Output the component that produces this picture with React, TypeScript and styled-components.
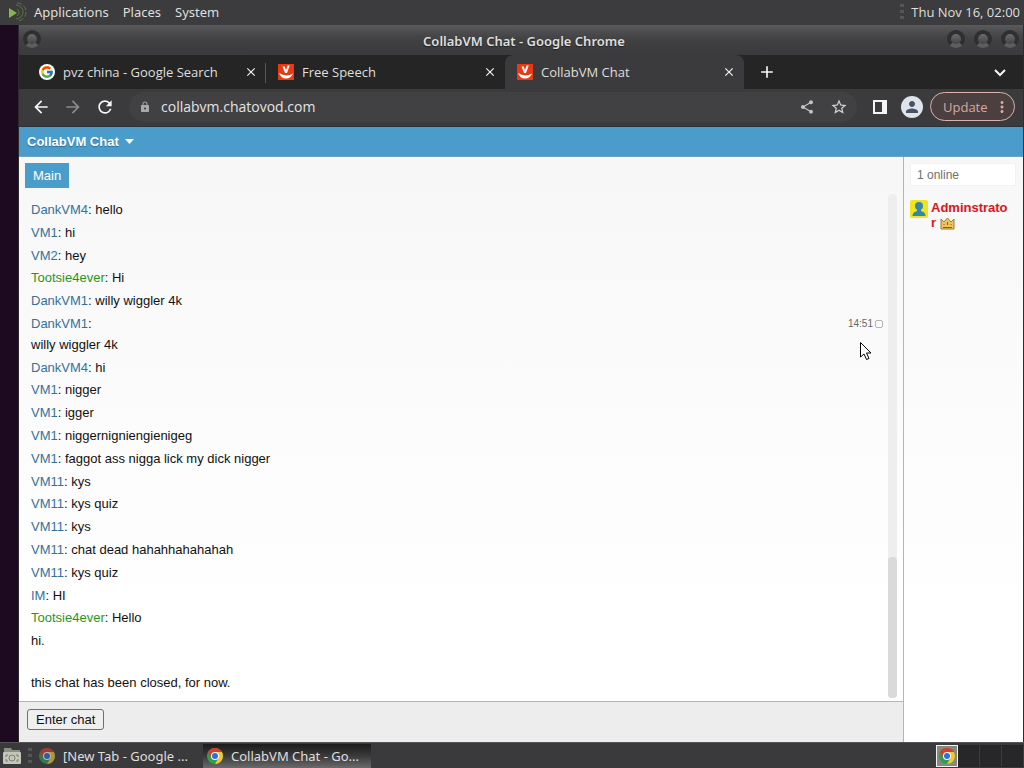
import React from "react";
import styled, { createGlobalStyle } from "styled-components";
import {
  MdArrowBack,
  MdArrowForward,
  MdRefresh,
  MdLock,
  MdShare,
  MdStarBorder,
  MdPerson,
  MdMoreVert,
  MdAdd,
  MdClose,
} from "react-icons/md";
import { FcGoogle } from "react-icons/fc";

const Global = createGlobalStyle`
  *, *::before, *::after { box-sizing: border-box; }
  body { margin: 0; background: #1d0a20; }
  button { font: inherit; color: inherit; margin: 0; padding: 0; border: 0; background: none; }
`;

const Desktop = styled.div`
  display: flex;
  flex-direction: column;
  min-height: 100vh;
  background: #1d0a20;
  color: #dfdfdf;
  font-family: "Noto Sans", sans-serif;
  font-size: 13px;
`;

/* ---------- desktop panels ---------- */

const TopPanel = styled.header`
  display: flex;
  align-items: center;
  height: 25px;
  padding: 0 4px 2px 8px;
  background: #3c3b3d;
`;

const Menu = styled.nav`
  display: flex;
  gap: 14px;
  margin-left: 7px;
  flex: 1;
`;

const Grip = styled.span`
  width: 4px;
  height: 16px;
  margin-right: 7px;
  background: repeating-linear-gradient(#565557 0 3px, transparent 3px 6px);
`;

const Clock = styled.time`
  font-family: "Open Sans", sans-serif;
`;

const BottomPanel = styled.footer`
  display: flex;
  align-items: center;
  height: 26px;
  border-top: 1px solid #555456;
  background: #3a393b;
`;

const Files = styled.button`
  display: flex;
  margin: 0 6px 0 2px;
`;

const Task = styled.button<{ $active?: boolean }>`
  display: flex;
  align-items: center;
  gap: 8px;
  width: 168px;
  height: 24px;
  padding: 0 4px;
  white-space: nowrap;
  background: ${(p) =>
    p.$active ? "linear-gradient(#1b1b1c, #3a3a3b 50%, #6a6a6b)" : "transparent"};
  svg { flex: none; opacity: ${(p) => (p.$active ? 1 : 0.65)}; }
`;

const TaskList = styled.nav`
  display: flex;
  margin-left: -4px;
`;

const Workspaces = styled.div`
  display: flex;
  margin-left: auto;
`;

const Workspace = styled.button<{ $current?: boolean }>`
  display: flex;
  align-items: center;
  justify-content: center;
  width: 22px;
  height: 22px;
  border: 1px solid ${(p) => (p.$current ? "#f2f2f2" : "transparent")};
  border-right-color: ${(p) => (p.$current ? "#f2f2f2" : "#3d3c3e")};
  background: ${(p) => (p.$current ? "#85897f" : "#272628")};
`;

/* ---------- browser window ---------- */

const Browser = styled.main`
  flex: 1;
  display: flex;
  flex-direction: column;
  margin-left: 18px;
  border: solid #2c2b2d;
  border-width: 0 1px 0 1px;
  background: #3b3a3c;
`;

const TitleBar = styled.div`
  display: flex;
  align-items: center;
  height: 30px;
  padding: 0 4px 2px;
  background: linear-gradient(#5a595b, #49484a 30%, #414042 50%, #3a393b);
`;

const Title = styled.h1`
  flex: 1;
  margin: 0 0 0 60px;
  padding-top: 4px;
  text-align: center;
  font-size: 13px;
  font-weight: 600;
  text-shadow: 0 1px 1px #222;
`;

const Knobs = styled.div`
  display: flex;
  gap: 9px;
`;

const Knob = styled.button`
  width: 18px;
  height: 18px;
  border-radius: 50%;
  border: 4px solid #2f2e30;
  border-bottom-color: #5d5c5e;
  background: linear-gradient(#6b6a6c, #434244);
`;

const TabStrip = styled.div`
  display: flex;
  height: 34px;
  padding: 0 6px 0 8px;
  background: #252526;
`;

const Tab = styled.div<{ $active?: boolean; $divided?: boolean }>`
  position: relative;
  display: flex;
  align-items: center;
  flex: 0 1 239px;
  min-width: 0;
  padding: 0 8px 0 12px;
  border-radius: 8px 8px 0 0;
  background: ${(p) => (p.$active ? "#3b3a3c" : "transparent")};
  &::after {
    content: "";
    display: ${(p) => (p.$divided ? "block" : "none")};
    position: absolute;
    right: 0;
    top: 8px;
    width: 1px;
    height: 20px;
    background: #555456;
  }
`;

const TabLabel = styled.span`
  flex: 1;
  margin-left: 8px;
  overflow: hidden;
  white-space: nowrap;
  font-family: "Open Sans", sans-serif;
`;

const IconButton = styled.button<{ $size?: number; $color?: string }>`
  display: flex;
  align-items: center;
  justify-content: center;
  flex: none;
  width: ${(p) => p.$size ?? 32}px;
  height: ${(p) => p.$size ?? 32}px;
  color: ${(p) => p.$color ?? "#f5f5f5"};
`;

const NewTabButton = styled(IconButton)`
  margin-left: 6px;
`;

const Spacer = styled.span`
  flex: 1;
`;

const Toolbar = styled.div`
  display: flex;
  align-items: center;
  height: 38px;
  padding: 0 8px 2px 6px;
  border-bottom: 1px solid #29333e;
`;

const AddressBar = styled.label`
  display: flex;
  align-items: center;
  flex: 1;
  height: 30px;
  margin: 0 7px 0 8px;
  padding: 0 2px 0 10px;
  border-radius: 15px;
  background: #414043;
  color: #a9a8aa;
`;

const Address = styled.input`
  flex: 1;
  min-width: 0;
  margin-left: 10px;
  padding: 0;
  border: 0;
  outline: 0;
  background: none;
  color: #e4e4e4;
  font: 14px "Open Sans", sans-serif;
`;

const Avatar = styled.button`
  display: flex;
  align-items: center;
  justify-content: center;
  width: 22px;
  height: 22px;
  margin: 0 7px 0 5px;
  border-radius: 50%;
  background: #dfe3ec;
  color: #4a5266;
`;

const UpdateButton = styled.button`
  display: flex;
  align-items: center;
  justify-content: space-between;
  width: 85px;
  height: 29px;
  padding: 0 3px 0 12px;
  border: 1px solid #dcb3ad;
  border-radius: 15px;
  background: #4b3f40;
  color: #d9a8a2;
  font-family: "Open Sans", sans-serif;
`;

/* ---------- chat page ---------- */

const Page = styled.div`
  flex: 1;
  display: flex;
  flex-direction: column;
  font-family: "Liberation Sans", Arial, sans-serif;
  font-size: 13px;
  color: #111;
`;

const ChatHeader = styled.div`
  height: 30px;
  padding: 0 8px;
  border-bottom: 1px solid #73a4bf;
  background: #4a9dcb;
`;

const ChatMenu = styled.button`
  display: flex;
  align-items: center;
  gap: 6px;
  height: 29px;
  color: #fff;
  font-weight: bold;
  text-shadow: 0 1px 1px #2c6a90;
`;

const Columns = styled.div`
  flex: 1;
  display: flex;
  background: linear-gradient(#f7f7f7, #fff 80%);
`;

const ChatColumn = styled.section`
  flex: 1;
  display: flex;
  flex-direction: column;
`;

const RoomTabs = styled.div`
  padding: 6px;
`;

const RoomTab = styled.button`
  height: 25px;
  padding: 0 8px;
  background: #4a9dcb;
  color: #fff;
`;

const LogArea = styled.div`
  flex: 1;
  display: flex;
  padding: 0 6px 3px 12px;
`;

const Log = styled.ul`
  flex: 1;
  margin: 0;
  padding: 5px 5px 0 0;
  list-style: none;
  line-height: 1.6;
`;

const Message = styled.li`
  position: relative;
  padding: 1px 0;
  white-space: pre-line;
`;

const Nick = styled.a<{ $green?: boolean }>`
  color: ${(p) => (p.$green ? "#1f961f" : "#36719a")};
  text-decoration: none;
`;

const Stamp = styled.label`
  display: flex;
  align-items: center;
  gap: 2px;
  float: right;
  height: 21px;
  color: #666;
  font-size: 10px;
`;

const Tick = styled.input`
  appearance: none;
  width: 8px;
  height: 8px;
  margin: 0;
  border: 1px solid #b5b5b5;
  border-radius: 2px;
`;

const Cursor = styled.svg`
  position: absolute;
  right: 10px;
  top: 28px;
`;

const ScrollTrack = styled.div`
  display: flex;
  align-items: flex-end;
  width: 9px;
  background: #eee;
  border-radius: 4px;
`;

const ScrollThumb = styled.div`
  width: 100%;
  height: 28%;
  border-radius: 4px;
  background: #dadada;
`;

const EntryBar = styled.div`
  height: 41px;
  padding: 7px 8px;
  border-top: 1px solid #b5b5b5;
  background: #ededed;
`;

const EnterButton = styled.button`
  height: 21px;
  padding: 0 8px;
  border: 1px solid #6f6f6f;
  border-radius: 3px;
  background: #efefef;
  line-height: 19px;
`;

const Sidebar = styled.aside`
  width: 120px;
  padding: 6px 7px 6px 6px;
  border-left: 1px solid #b5b5b5;
`;

const OnlineCount = styled.div`
  height: 23px;
  margin-bottom: 14px;
  padding-left: 6px;
  background: #fff;
  border: 1px solid #f2f2f2;
  color: #6f6f6f;
  font-size: 12px;
  line-height: 22px;
`;

const User = styled.a`
  display: flex;
  gap: 3px;
  padding-right: 6px;
  color: #dc1420;
  font-weight: bold;
  line-height: 15px;
  text-decoration: none;
  word-break: break-all;
  svg { flex: none; vertical-align: middle; }
`;

const ChromeLogo = () => (
  <svg width="16" height="16" viewBox="0 0 16 16" aria-hidden="true">
    <circle cx="8" cy="8" r="8" fill="#2f9e4f" />
    <path d="M8 8 1.1 4A8 8 0 0 1 14.9 4H8Z" fill="#dc3b2d" />
    <path d="M8 4h6.9A8 8 0 0 1 8 16l3.5-6Z" fill="#f7c52f" />
    <path d="M1.1 4 4.5 10 8 4Z" fill="#dc3b2d" />
    <circle cx="8" cy="8" r="4" fill="#fff" />
    <circle cx="8" cy="8" r="3" fill="#2e6fd8" />
  </svg>
);

const ChatovodIcon = () => (
  <svg width="16" height="16" viewBox="0 0 16 16" aria-hidden="true">
    <rect width="16" height="16" fill="#e83a12" />
    <path d="M4.500 2.500h2.300L8 6.500l1.500-5h2.200L9 9H7Z" fill="#fff" />
    <path d="M1 9Q8 13.500 15 9.500Q13 14.500 8 14.500T1 9Z" fill="#fff" />
  </svg>
);

const MateLogo = () => (
  <svg width="19" height="20" viewBox="0 0 19 20" fill="none" aria-hidden="true">
    <path d="M1 7v10l8-5Z" fill="#8bb34f" transform="translate(0 -1)" />
    <path d="M7 4a7 7 0 1 1 0 14" stroke="#5e7446" transform="translate(1 -1)" />
    <path d="M9 1a9 9 0 0 1 0 18" stroke="#5e7446" strokeDasharray="5 2" />
    <path d="M9 7a4 4 0 0 1 0 7" stroke="#5e7446" />
  </svg>
);

const FolderIcon = () => (
  <svg width="20" height="18" viewBox="0 0 20 18" aria-hidden="true">
    <path d="M2 1h7l1 2h8v5H2Z" fill="#8d8f84" />
    <rect x="1" y="5" width="18" height="12" rx="1" fill="#c4c6b8" />
    <path d="M4 8h2M4 8v2M16 8h-2M16 8v2M4 14h2M4 14v-2M16 14h-2M16 14v-2" stroke="#7d7f75" />
    <circle cx="10" cy="11" r="3" stroke="#7d7f75" fill="none" />
  </svg>
);

const UserIcon = () => (
  <svg width="18" height="18" viewBox="0 0 18 18" aria-hidden="true">
    <rect width="18" height="18" rx="2" fill="#f0e51c" />
    <circle cx="9" cy="6" r="4" fill="#3286b0" />
    <path d="M2.500 16q0-4 4.500-5V8h4v3q4.500 1 4.500 5Z" fill="#3286b0" />
  </svg>
);

const Crown = () => (
  <svg width="15" height="13" viewBox="0 0 15 13" aria-label="owner">
    <path d="M1 2l3 3 3.500-4L11 5l3-3v10H1Z" fill="#ecc65c" stroke="#a37a35" />
    <path d="M3 10.500h9M7.500 5v3M4 7v1M11 7v1" stroke="#8b5a2a" />
  </svg>
);

const tabs = [
  { label: "pvz china - Google Search", icon: <FcGoogle size={14} />, google: true, divided: true },
  { label: "Free Speech", icon: <ChatovodIcon /> },
  { label: "CollabVM Chat", icon: <ChatovodIcon />, active: true },
];

const GoogleBadge = styled.span`
  display: flex;
  align-items: center;
  justify-content: center;
  width: 16px;
  height: 16px;
  border-radius: 50%;
  background: #fff;
`;

type Entry = { nick: string; text: string; green?: boolean; stamp?: string };

const messages: Entry[] = [
  { nick: "DankVM4", text: "hello" },
  { nick: "VM1", text: "hi" },
  { nick: "VM2", text: "hey" },
  { nick: "Tootsie4ever", text: "Hi", green: true },
  { nick: "DankVM1", text: "willy wiggler 4k" },
  { nick: "DankVM1", text: "\nwilly wiggler 4k", stamp: "14:51" },
  { nick: "DankVM4", text: "hi" },
  { nick: "VM1", text: "nigger" },
  { nick: "VM1", text: "igger" },
  { nick: "VM1", text: "niggernigniengienigeg" },
  { nick: "VM1", text: "faggot ass nigga lick my dick nigger" },
  { nick: "VM11", text: "kys" },
  { nick: "VM11", text: "kys quiz" },
  { nick: "VM11", text: "kys" },
  { nick: "VM11", text: "chat dead hahahhahahahah" },
  { nick: "VM11", text: "kys quiz" },
  { nick: "IM", text: "HI" },
  { nick: "Tootsie4ever", text: "Hello", green: true },
];

export default function App() {
  return (
    <>
      <Global />
      <Desktop>
        <TopPanel>
          <MateLogo />
          <Menu>
            <button>Applications</button>
            <button>Places</button>
            <button>System</button>
          </Menu>
          <Grip />
          <Clock>Thu Nov 16, 02:00</Clock>
        </TopPanel>

        <Browser>
          <TitleBar>
            <Knob aria-label="Window menu" />
            <Title>CollabVM Chat - Google Chrome</Title>
            <Knobs>
              <Knob aria-label="Minimize" />
              <Knob aria-label="Maximize" />
              <Knob aria-label="Close" />
            </Knobs>
          </TitleBar>

          <TabStrip>
            {tabs.map((t) => (
              <Tab key={t.label} $active={t.active} $divided={t.divided}>
                {t.google ? <GoogleBadge>{t.icon}</GoogleBadge> : t.icon}
                <TabLabel>{t.label}</TabLabel>
                <IconButton $size={14} aria-label="Close tab">
                  <MdClose size={14} stroke="currentColor" />
                </IconButton>
              </Tab>
            ))}
            <NewTabButton $size={34} aria-label="New tab">
              <MdAdd size={20} />
            </NewTabButton>
            <Spacer />
            <IconButton $size={34} aria-label="Search tabs">
              <svg width="12" height="12" viewBox="0 0 12 12" fill="none">
                <path d="M1 4l5 5 5-5" stroke="currentColor" strokeWidth="2" />
              </svg>
            </IconButton>
          </TabStrip>

          <Toolbar>
            <IconButton aria-label="Back"><MdArrowBack size={20} /></IconButton>
            <IconButton aria-label="Forward" $color="#8b8a8c"><MdArrowForward size={20} /></IconButton>
            <IconButton aria-label="Reload"><MdRefresh size={20} /></IconButton>
            <AddressBar>
              <MdLock size={12} />
              <Address aria-label="Address" defaultValue="collabvm.chatovod.com" />
              <IconButton aria-label="Share" $color="#c4c3c5"><MdShare size={16} /></IconButton>
              <IconButton aria-label="Bookmark" $color="#d4d3d5"><MdStarBorder size={18} /></IconButton>
            </AddressBar>
            <IconButton aria-label="Side panel">
              <svg width="14" height="14" viewBox="0 0 14 14">
                <path d="M0 0h14v14H0ZM2 2v10h7V2Z" fill="currentColor" fillRule="evenodd" />
              </svg>
            </IconButton>
            <Avatar aria-label="Profile"><MdPerson size={18} /></Avatar>
            <UpdateButton>
              Update
              <MdMoreVert size={18} />
            </UpdateButton>
          </Toolbar>

          <Page>
            <ChatHeader>
              <ChatMenu>
                CollabVM Chat
                <svg width="9" height="5" viewBox="0 0 9 5" aria-hidden="true">
                  <path d="M0 0h9L4.500 5Z" fill="#fff" />
                </svg>
              </ChatMenu>
            </ChatHeader>
            <Columns>
              <ChatColumn>
                <RoomTabs><RoomTab>Main</RoomTab></RoomTabs>
                <LogArea>
                  <Log>
                    {messages.map((m, i) => (
                      <Message key={i}>
                        {m.stamp && (
                          <Stamp>
                            {m.stamp}
                            <Tick type="checkbox" />
                          </Stamp>
                        )}
                        <Nick href="#" $green={m.green}>{m.nick}</Nick>: {m.text}
                        {m.stamp && (
                          <Cursor width="14" height="20" viewBox="0 0 14 20" aria-hidden="true">
                            <path
                              d="M1.500 1.500v14.500l3.500-3 2.500 5.500 2.500-1-2.500-5.500h4.500Z"
                              fill="#fff"
                              stroke="#000"
                            />
                          </Cursor>
                        )}
                      </Message>
                    ))}
                    <Message>{"hi.\n\nthis chat has been closed, for now."}</Message>
                  </Log>
                  <ScrollTrack><ScrollThumb /></ScrollTrack>
                </LogArea>
                <EntryBar><EnterButton>Enter chat</EnterButton></EntryBar>
              </ChatColumn>
              <Sidebar>
                <OnlineCount>1 online</OnlineCount>
                <User href="#">
                  <UserIcon />
                  <span>Adminstrator <Crown /></span>
                </User>
              </Sidebar>
            </Columns>
          </Page>
        </Browser>

        <BottomPanel>
          <Files aria-label="Show files"><FolderIcon /></Files>
          <Grip />
          <TaskList>
            <Task>
              <ChromeLogo />
              [New Tab - Google ...
            </Task>
            <Task $active>
              <ChromeLogo />
              CollabVM Chat - Go...
            </Task>
          </TaskList>
          <Workspaces>
            <Workspace $current aria-label="Workspace 1"><ChromeLogo /></Workspace>
            <Workspace aria-label="Workspace 2" />
            <Workspace aria-label="Workspace 3" />
            <Workspace aria-label="Workspace 4" />
          </Workspaces>
        </BottomPanel>
      </Desktop>
    </>
  );
}
